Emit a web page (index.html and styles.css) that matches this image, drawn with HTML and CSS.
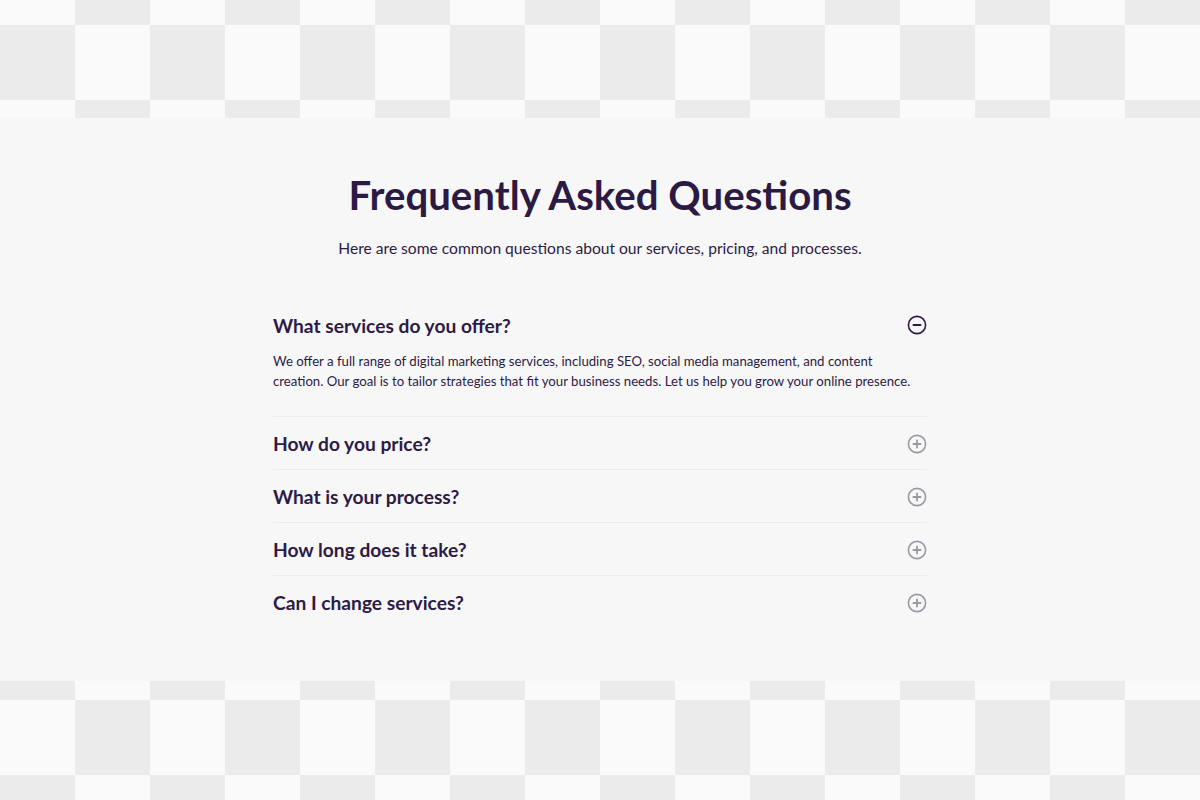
FILE: index.html
```html
<!DOCTYPE html>
<html lang="en">
<head>
  <meta charset="UTF-8">
  <title>FAQ</title>
  <link rel="stylesheet" href="styles.css">
</head>
<body>
  <section class="faq">
    <h1>Frequently Asked Questions</h1>
    <p class="lead">Here are some common questions about our services, pricing, and processes.</p>

    <div class="faq-list">
      <div class="faq-item open">
        <div class="question">
          <span>What services do you offer?</span>
          <svg class="toggle" width="20" height="20" viewBox="0 0 20 20"><circle cx="10" cy="10" r="8.6" fill="none" stroke="currentColor" stroke-width="1.6"/><path d="M6.4 10h7.2" stroke="currentColor" stroke-width="1.8" stroke-linecap="round"/></svg>
        </div>
        <p class="answer">We offer a full range of digital marketing services, including SEO, social media management, and content creation. Our goal is to tailor strategies that fit your business needs. Let us help you grow your online presence.</p>
      </div>
      <div class="faq-item">
        <div class="question">
          <span>How do you price?</span>
          <svg class="toggle" width="20" height="20" viewBox="0 0 20 20"><circle cx="10" cy="10" r="8.6" fill="none" stroke="currentColor" stroke-width="1.6"/><path d="M6.4 10h7.2M10 6.4v7.2" stroke="currentColor" stroke-width="1.8" stroke-linecap="round"/></svg>
        </div>
      </div>
      <div class="faq-item">
        <div class="question">
          <span>What is your process?</span>
          <svg class="toggle" width="20" height="20" viewBox="0 0 20 20"><circle cx="10" cy="10" r="8.6" fill="none" stroke="currentColor" stroke-width="1.6"/><path d="M6.4 10h7.2M10 6.4v7.2" stroke="currentColor" stroke-width="1.8" stroke-linecap="round"/></svg>
        </div>
      </div>
      <div class="faq-item">
        <div class="question">
          <span>How long does it take?</span>
          <svg class="toggle" width="20" height="20" viewBox="0 0 20 20"><circle cx="10" cy="10" r="8.6" fill="none" stroke="currentColor" stroke-width="1.6"/><path d="M6.4 10h7.2M10 6.4v7.2" stroke="currentColor" stroke-width="1.8" stroke-linecap="round"/></svg>
        </div>
      </div>
      <div class="faq-item">
        <div class="question">
          <span>Can I change services?</span>
          <svg class="toggle" width="20" height="20" viewBox="0 0 20 20"><circle cx="10" cy="10" r="8.6" fill="none" stroke="currentColor" stroke-width="1.6"/><path d="M6.4 10h7.2M10 6.4v7.2" stroke="currentColor" stroke-width="1.8" stroke-linecap="round"/></svg>
        </div>
      </div>
    </div>
  </section>
</body>
</html>
```

FILE: styles.css
```css
body {
  margin: 0;
  min-height: 800px;
  font-family: Lato, "Noto Sans", sans-serif;
  color: #2d1b45;
  background-color: #fafafa;
  background-image: conic-gradient(#ebebeb 25%, transparent 0 50%, #ebebeb 0 75%, transparent 0);
  background-size: 150px 150px;
  background-position: 0 -50px;
  padding-top: 118px;
  box-sizing: border-box;
}
.faq {
  background: #f7f7f7;
  height: 563px;
  box-sizing: border-box;
  padding: 53px 0 0;
}
h1 {
  margin: 0;
  text-align: center;
  font-size: 40.2px;
  line-height: 48px;
  font-weight: 700;
  color: #2b1a43;
}
.lead {
  margin: 17px 0 0;
  text-align: center;
  font-size: 15.6px;
  line-height: 24px;
}
.faq-list {
  width: 654px;
  margin: 39px auto 0;
}
.faq-item {
  border-bottom: 1px solid #ececec;
}
.faq-item:last-child {
  border-bottom: none;
}
.question {
  display: flex;
  align-items: center;
  justify-content: space-between;
  height: 52px;
  font-size: 19.2px;
  font-weight: 700;
}
.toggle {
  color: #9b98a3;
  margin-top: 2px;
}
.open .toggle {
  color: #2d1b45;
  margin-top: 0;
}
.answer {
  margin: 0;
  padding: 0 8px 25px 0;
  font-size: 13.2px;
  line-height: 20px;
}
```
